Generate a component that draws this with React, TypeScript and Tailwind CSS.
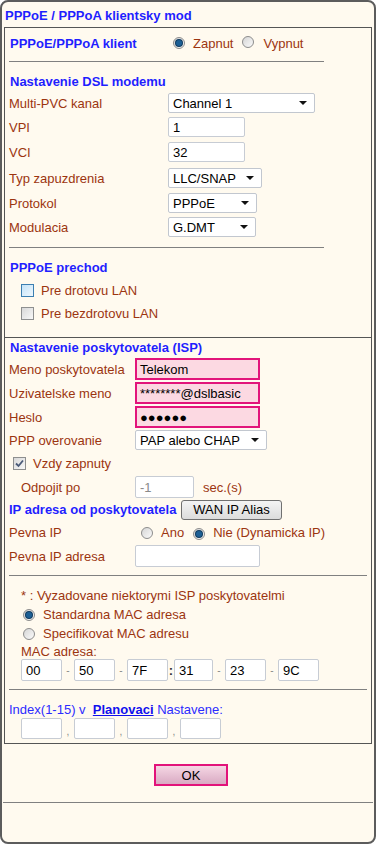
import React from "react";

const LBL = "text-[#9c3510]";
const HDR = "font-bold text-[#1f1fff]";

function Radio({ checked }: { checked?: boolean }) {
  return (
    <span className="relative inline-flex w-[12px] h-[12px] rounded-full border border-[#8c8c8c] bg-gradient-to-br from-[#d6d6d6] to-[#fafafa] items-center justify-center shrink-0">
      {checked && <span className="w-[6px] h-[6px] rounded-full bg-[#1c5f95] ring-1 ring-[#0f3a5e]" />}
    </span>
  );
}

function Checkbox({ checked, hover }: { checked?: boolean; hover?: boolean }) {
  return (
    <span
      className={
        "relative inline-flex w-[13px] h-[13px] border items-center justify-center shrink-0 " +
        (hover
          ? "border-[#3c7fb1] bg-gradient-to-br from-[#c4e3f8] to-[#eef7fd]"
          : "border-[#8e8f8f] bg-gradient-to-br from-[#d8d8d8] to-[#f8f8f8]")
      }
    >
      {checked && (
        <svg width="9" height="9" viewBox="0 0 9 9">
          <path d="M1 4.5 L3.5 7 L8 1.5" stroke="#4a5a78" strokeWidth="1.8" fill="none" />
        </svg>
      )}
    </span>
  );
}

function Select({ w, value }: { w: string; value: string }) {
  return (
    <div className={"h-[20px] border border-[#c2c7cf] rounded-[2px] bg-white flex items-center pl-[4px] pr-[7px] justify-between text-black " + w}>
      <span>{value}</span>
      <svg width="8" height="4" viewBox="0 0 8 4">
        <path d="M0 0 L8 0 L4 4 Z" fill="#111" />
      </svg>
    </div>
  );
}

function Input({ w, value, h = "h-[20px]", gray }: { w: string; value?: string; h?: string; gray?: boolean }) {
  return (
    <div className={"border border-[#c7ccd4] rounded-[2px] bg-white flex items-center pl-[4px] " + h + " " + w + (gray ? " text-[#8a8a8a]" : " text-black")}>
      {value}
    </div>
  );
}

function Pink({ value }: { value: string }) {
  return (
    <div className="w-[125px] h-[22px] border-2 border-[#e2157b] bg-[#fcd9e2] flex items-center pl-[3px] text-black">
      {value}
    </div>
  );
}

function Sep({ c }: { c: string }) {
  return <span className="w-[12px] text-center text-[#888] text-[10px]">{c}</span>;
}

export default function App() {
  return (
    <div
      className="w-[376px] h-[844px] border-2 border-[#5c5c5c] rounded-[8px] bg-[#fffaef] flex flex-col text-[13px] leading-[15px]"
      style={{ fontFamily: '"Liberation Sans", Arial, sans-serif' }}
    >
      <div className={"h-[25px] pl-[3px] pt-[6px] " + HDR}>PPPoE / PPPoA klientsky mod</div>
      <div className="ml-[2px] w-[368px] border border-[#555]">
        {/* Section 1 */}
        <div className="pl-[4px] pt-[3px] pb-[12px]">
          <div className="h-[24px] flex items-center">
            <span className={"w-[164px] pl-[1px] " + HDR}>PPPoE/PPPoA klient</span>
            <Radio checked />
            <span className={"ml-[8px] " + LBL}>Zapnut</span>
            <span className="ml-[9px]"><Radio /></span>
            <span className={"ml-[9px] " + LBL}>Vypnut</span>
          </div>
          <div className="mt-[6px] w-[315px] h-px bg-[#808080]" />
          <div className={"mt-[9px] h-[20px] flex items-center pl-[1px] " + HDR}>Nastavenie DSL modemu</div>
          <div className="h-[24px] flex items-center">
            <span className={"w-[159px] " + LBL}>Multi-PVC kanal</span>
            <Select w="w-[147px]" value="Channel 1" />
          </div>
          <div className="h-[24px] flex items-center">
            <span className={"w-[159px] " + LBL}>VPI</span>
            <Input w="w-[77px]" value="1" />
          </div>
          <div className="h-[26px] flex items-center">
            <span className={"w-[159px] " + LBL}>VCI</span>
            <Input w="w-[77px]" value="32" />
          </div>
          <div className="h-[26px] flex items-center">
            <span className={"w-[159px] " + LBL}>Typ zapuzdrenia</span>
            <Select w="w-[94px]" value="LLC/SNAP" />
          </div>
          <div className="h-[24px] flex items-center">
            <span className={"w-[159px] " + LBL}>Protokol</span>
            <Select w="w-[89px]" value="PPPoE" />
          </div>
          <div className="h-[24px] flex items-center">
            <span className={"w-[159px] " + LBL}>Modulacia</span>
            <Select w="w-[88px]" value="G.DMT" />
          </div>
          <div className="mt-[8px] w-[315px] h-px bg-[#808080]" />
          <div className={"mt-[9px] h-[20px] flex items-center pl-[1px] " + HDR}>PPPoE prechod</div>
          <div className="mt-[2px] h-[23px] flex items-center pl-[12px]">
            <Checkbox hover />
            <span className={"ml-[7px] " + LBL}>Pre drotovu LAN</span>
          </div>
          <div className="h-[23px] flex items-center pl-[12px]">
            <Checkbox />
            <span className={"ml-[7px] " + LBL}>Pre bezdrotovu LAN</span>
          </div>
        </div>
        {/* Section 2 */}
        <div className="border-t border-[#555] pl-[4px] pb-[4px]">
          <div className={"h-[19px] flex items-center pl-[1px] " + HDR}>Nastavenie poskytovatela (ISP)</div>
          <div className="h-[24px] flex items-center">
            <span className={"w-[126px] " + LBL}>Meno poskytovatela</span>
            <Pink value="Telekom" />
          </div>
          <div className="h-[24px] flex items-center">
            <span className={"w-[126px] " + LBL}>Uzivatelske meno</span>
            <Pink value="********@dslbasic" />
          </div>
          <div className="h-[24px] flex items-center">
            <span className={"w-[126px] " + LBL}>Heslo</span>
            <Pink value="●●●●●●" />
          </div>
          <div className="h-[22px] flex items-center">
            <span className={"w-[126px] " + LBL}>PPP overovanie</span>
            <Select w="w-[132px]" value="PAP alebo CHAP" />
          </div>
          <div className="h-[24px] flex items-center pl-[4px]">
            <Checkbox checked />
            <span className={"ml-[7px] " + LBL}>Vzdy zapnuty</span>
          </div>
          <div className="h-[24px] flex items-center">
            <span className={"w-[126px] pl-[12px] " + LBL}>Odpojit po</span>
            <Input w="w-[59px]" h="h-[22px]" value="-1" gray />
            <span className={"ml-[9px] " + LBL}>sec.(s)</span>
          </div>
          <div className="h-[21px] flex items-center">
            <span className={"w-[172px] " + HDR}>IP adresa od poskytovatela</span>
            <div className="w-[101px] h-[20px] border border-[#707070] rounded-[3px] bg-gradient-to-b from-[#f4f4f4] to-[#dcdcdc] flex items-center justify-center text-black">
              WAN IP Alias
            </div>
          </div>
          <div className="h-[25px] flex items-center">
            <span className={"w-[132px] " + LBL}>Pevna IP</span>
            <Radio />
            <span className={"ml-[8px] " + LBL}>Ano</span>
            <span className="ml-[9px]"><Radio checked /></span>
            <span className={"ml-[8px] " + LBL}>Nie (Dynamicka IP)</span>
          </div>
          <div className="h-[22px] flex items-center">
            <span className={"w-[126px] " + LBL}>Pevna IP adresa</span>
            <Input w="w-[125px]" h="h-[22px]" />
          </div>
          <div className="mt-[8px] w-[358px] h-px bg-[#808080]" />
          <div className={"mt-[9px] h-[20px] flex items-center pl-[12px] " + LBL}>* : Vyzadovane niektorymi ISP poskytovatelmi</div>
          <div className="h-[19px] flex items-center pl-[14px]">
            <Radio checked />
            <span className={"ml-[8px] " + LBL}>Standardna MAC adresa</span>
          </div>
          <div className="h-[19px] flex items-center pl-[14px]">
            <Radio />
            <span className={"ml-[8px] " + LBL}>Specifikovat MAC adresu</span>
          </div>
          <div className={"h-[16px] flex items-center pl-[12px] " + LBL}>MAC adresa:</div>
          <div className="h-[22px] flex items-center pl-[12px]">
            <Input w="w-[41px]" h="h-[22px]" value="00" />
            <Sep c="-" />
            <Input w="w-[41px]" h="h-[22px]" value="50" />
            <Sep c="-" />
            <Input w="w-[41px]" h="h-[22px]" value="7F" />
            <span className="w-[6px] text-center font-bold text-[#333]">:</span>
            <Input w="w-[39px]" h="h-[22px]" value="31" />
            <Sep c="-" />
            <Input w="w-[41px]" h="h-[22px]" value="23" />
            <Sep c="-" />
            <Input w="w-[41px]" h="h-[22px]" value="9C" />
          </div>
          <div className="mt-[8px] w-[358px] h-px bg-[#808080]" />
          <div className="mt-[10px] h-[18px] flex items-center text-[#2c2cff]">
            <span>Index(1-15) v&nbsp;&nbsp;</span>
            <span className="font-bold underline text-[#1010ee]">Planovaci</span>
            <span>&nbsp;Nastavene:</span>
          </div>
          <div className="h-[21px] flex items-end pl-[12px]">
            <Input w="w-[41px]" h="h-[21px]" />
            <Sep c="," />
            <Input w="w-[41px]" h="h-[21px]" />
            <Sep c="," />
            <Input w="w-[41px]" h="h-[21px]" />
            <Sep c="," />
            <Input w="w-[41px]" h="h-[21px]" />
          </div>
        </div>
      </div>
      <div className="mt-[20px] flex justify-center pl-[6px]">
        <div className="w-[74px] h-[22px] border-2 border-[#e2137a] bg-gradient-to-b from-[#f5d7e4] to-[#d9aac3] flex items-center justify-center text-black">
          OK
        </div>
      </div>
      <div className="mt-[16px] ml-[1px] w-[370px] h-px bg-[#808080]" />
    </div>
  );
}
